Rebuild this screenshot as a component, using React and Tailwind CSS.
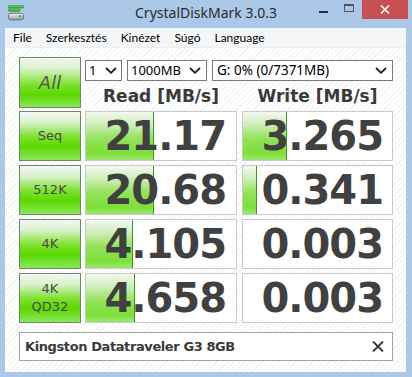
import React from "react";

const rows = [
  { label: ["Seq"], read: "21.17", rw: 68, write: "3.265", ww: 44 },
  { label: ["512K"], read: "20.68", rw: 68, write: "0.341", ww: 14 },
  { label: ["4K"], read: "4.105", rw: 47, write: "0.003", ww: 0 },
  { label: ["4K", "QD32"], read: "4.658", rw: 49, write: "0.003", ww: 0 },
];

function AppIcon() {
  return (
    <svg width="16" height="16" viewBox="0 0 16 16">
      <defs>
        <linearGradient id="gb" x1="0" y1="0" x2="0" y2="1">
          <stop offset="0" stopColor="#7be07b" />
          <stop offset="1" stopColor="#22a822" />
        </linearGradient>
        <linearGradient id="dr" x1="0" y1="0" x2="0" y2="1">
          <stop offset="0" stopColor="#f4f4f4" />
          <stop offset="1" stopColor="#9a9a9a" />
        </linearGradient>
      </defs>
      <rect x="0.5" y="0.5" width="15" height="2.5" rx="0.8" fill="url(#gb)" stroke="#2a8a2a" strokeWidth="0.6" />
      <rect x="0.5" y="3.8" width="11.5" height="2.5" rx="0.8" fill="url(#gb)" stroke="#2a8a2a" strokeWidth="0.6" />
      <rect x="0.5" y="8.3" width="15" height="6.5" rx="2" fill="url(#dr)" stroke="#606060" strokeWidth="0.8" />
      <rect x="10.5" y="10.3" width="3" height="2" fill="#35c835" />
    </svg>
  );
}

function Chevron() {
  return (
    <svg width="12" height="7" viewBox="0 0 12 7">
      <polyline points="1,1 6,5.8 11,1" fill="none" stroke="#1e1e1e" strokeWidth="1.8" />
    </svg>
  );
}

function Cell({ value, bar, wide }) {
  return (
    <div
      className={
        wide
          ? "relative w-[152px] h-[50px] border border-[#c9c9c9] bg-white flex items-center justify-end pr-[10px] overflow-hidden"
          : "relative w-[151px] h-[50px] border border-[#c9c9c9] bg-white flex items-center justify-end pr-[9px] overflow-hidden"
      }
    >
      {bar > 0 && (
        <div
          className="absolute left-0 top-0 bottom-0 border-r border-[#3f9420] bg-[linear-gradient(to_bottom,#f3f8ef_0%,#d2efbf_25%,#93e35a_55%,#7ddf3a_85%,#9ae86c_100%)]"
          style={{ width: bar }}
        />
      )}
      <span className="relative font-['DejaVu_Sans',sans-serif] font-bold text-[40px] leading-none tracking-[-1px] text-[#404040]">
        {value}
      </span>
    </div>
  );
}

export default function App() {
  return (
    <div className="w-[412px] h-[377px] bg-[#abc8e9] flex flex-col overflow-hidden font-['Noto_Sans',sans-serif]">
      {/* title bar */}
      <div className="h-[28px] shrink-0 grid grid-cols-[1fr_auto_1fr] items-start">
        <div className="pl-[8px] pt-[5px]">
          <AppIcon />
        </div>
        <div className="pt-[3px] text-[14px] leading-[20px] text-[#2b2b2b]">CrystalDiskMark 3.0.3</div>
        <div className="flex justify-end pr-[4px]">
          <div className="w-[26px] h-[19px] flex justify-center pt-[11px]">
            <div className="w-[9px] h-[2px] bg-[#2b2b2b]" />
          </div>
          <div className="w-[26px] h-[19px] flex justify-center pt-[4px]">
            <div className="w-[10px] h-[8px] border border-[#555] border-t-2" />
          </div>
          <div className="w-[46px] h-[19px] bg-[#c75050] flex items-center justify-center">
            <svg width="10" height="9" viewBox="0 0 10 9">
              <line x1="1" y1="0.5" x2="9" y2="8.5" stroke="#fff" strokeWidth="1.6" />
              <line x1="9" y1="0.5" x2="1" y2="8.5" stroke="#fff" strokeWidth="1.6" />
            </svg>
          </div>
        </div>
      </div>

      {/* client */}
      <div className="flex-1 ml-[5px] mr-[6px] mb-[5px] bg-white flex flex-col">
        <div className="h-[20px] shrink-0 bg-[#f5f6f7] border-b border-[#eceef0] flex items-center pl-[8px] gap-[14px] font-['Lato',sans-serif] text-[12px] text-black">
          <span>File</span>
          <span>Szerkesztés</span>
          <span>Kinézet</span>
          <span>Súgó</span>
          <span>Language</span>
        </div>

        <div className="flex-1 pl-[14px] pt-[9px] bg-[repeating-linear-gradient(135deg,#ffffff_0px,#ffffff_3px,#f2f2f2_3px,#f2f2f2_4px)]">
          {/* top section */}
          <div className="flex items-start">
            <div className="w-[62px] h-[51px] border border-[#6f876f] bg-[linear-gradient(to_bottom,#f6f6f6_0%,#d8f2c8_22%,#7be22c_55%,#5cd800_75%,#8ae85a_100%)] flex items-center justify-center">
              <span className="font-['DejaVu_Sans',sans-serif] italic text-[18px] text-[#555]">All</span>
            </div>
            <div className="ml-[4px] w-[308px] flex flex-col">
              <div className="mt-[3px] flex gap-[5px] text-[13px] text-black">
                <div className="w-[37px] h-[21px] border border-[#7a7a7a] bg-white flex items-center justify-between pl-[3px] pr-[4px]">
                  <span>1</span>
                  <Chevron />
                </div>
                <div className="w-[80px] h-[21px] border border-[#7a7a7a] bg-white flex items-center justify-between pl-[3px] pr-[5px]">
                  <span>1000MB</span>
                  <Chevron />
                </div>
                <div className="w-[181px] h-[21px] border border-[#7a7a7a] bg-white flex items-center justify-between pl-[4px] pr-[5px]">
                  <span className="text-[13.5px]">G: 0% (0/7371MB)</span>
                  <Chevron />
                </div>
              </div>
              <div className="mt-[5px] flex gap-[5px] font-['DejaVu_Sans',sans-serif] font-bold text-[17px] leading-[20px] text-[#3a3a3a]">
                <div className="w-[152px] text-center">Read [MB/s]</div>
                <div className="w-[151px] text-center">Write [MB/s]</div>
              </div>
            </div>
          </div>

          {/* rows */}
          <div className="mt-[3px] flex flex-col gap-[4px]">
            {rows.map((r, i) => (
              <div key={i} className="flex">
                <div className="w-[62px] h-[50px] border border-[#6f876f] bg-[linear-gradient(to_bottom,#f6f6f6_0%,#d8f2c8_22%,#7be22c_52%,#5cd800_72%,#8ae85a_100%)] flex flex-col items-center justify-center font-['DejaVu_Sans',sans-serif] text-[13px] leading-[18px] text-[#4a4a4a]">
                  {r.label.map((l) => (
                    <span key={l}>{l}</span>
                  ))}
                </div>
                <div className="ml-[4px]">
                  <Cell value={r.read} bar={r.rw} wide />
                </div>
                <div className="ml-[5px]">
                  <Cell value={r.write} bar={r.ww} />
                </div>
              </div>
            ))}
          </div>

          {/* footer */}
          <div className="mt-[9px] w-[374px] h-[29px] border border-[#a3a3a3] bg-white flex items-center justify-between pl-[5px] pr-[8px]">
            <span className="font-['DejaVu_Sans',sans-serif] font-bold text-[13px] tracking-[-0.4px] text-[#3a3a3a]">
              Kingston Datatraveler G3 8GB
            </span>
            <svg width="12" height="11" viewBox="0 0 12 11">
              <line x1="1" y1="0.5" x2="11" y2="10.5" stroke="#333" strokeWidth="1.8" />
              <line x1="11" y1="0.5" x2="1" y2="10.5" stroke="#333" strokeWidth="1.8" />
            </svg>
          </div>
        </div>
      </div>
    </div>
  );
}
